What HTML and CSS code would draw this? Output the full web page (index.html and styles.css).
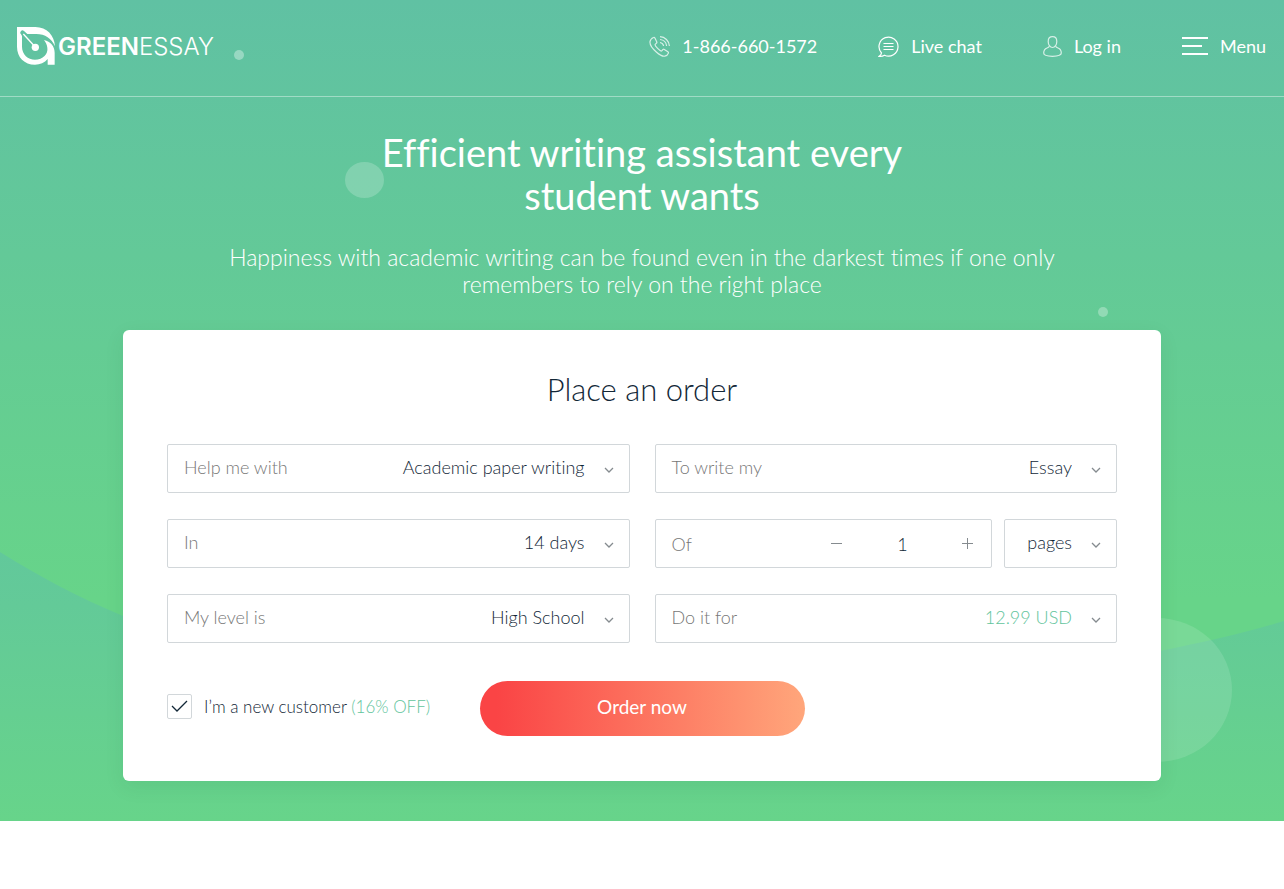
FILE: index.html
```html
<!DOCTYPE html>
<html lang="en">
<head>
    <meta charset="UTF-8">
    <meta name="viewport" content="width=device-width, initial-scale=1.0">
    <title>GreenEssay</title>
    <link rel="stylesheet" href="styles.css">
</head>
<body>
    <div class="hero">
        <svg class="wave" viewBox="0 0 1284 270" preserveAspectRatio="none" aria-hidden="true">
            <defs>
                <linearGradient id="waveFill" x1="0" y1="0" x2="0" y2="1">
                    <stop offset="0" stop-color="#62c89b"/>
                    <stop offset="0.2" stop-color="#63ca98"/>
                    <stop offset="1" stop-color="#67d48a"/>
                </linearGradient>
            </defs>
            <path fill="url(#waveFill)" d="M0 1C40 26 80 47 123 65C400 180 800 180 1160 100C1205 91 1245 82 1284 70V270H0Z"/>
        </svg>
        <span class="bubble bubble-logo"></span>
        <span class="bubble bubble-title"></span>
        <span class="bubble bubble-text"></span>
        <span class="bubble bubble-big"></span>

        <header class="header">
            <a class="logo" href="#">
                <svg class="logo-icon" viewBox="0 0 114 114" aria-hidden="true">
                    <path fill="#fff" fill-rule="evenodd" d="M0 0H55C90 0 112 25 114 58C104 34 84 21 58 21H31L21 12A6 6 0 1 0 12 22L15 27V59C15 82 33 98 54 98C78 98 94 80 91 62C90 53 86 46 81 39C101 44 113 58 113 77V113H92V96C83 107 69 113 54 113C22 113 0 91 0 59Z"/>
                    <circle cx="16" cy="17" r="4" fill="#60c1a2"/>
                    <path stroke="#fff" stroke-width="4" d="M19 21L52 57"/>
                    <circle cx="55" cy="61" r="11" fill="#fff"/>
                </svg>
                <span class="logo-text"><b>GREEN</b>ESSAY</span>
            </a>
            <nav class="nav">
                <a class="nav-link" href="tel:18666601572">
                    <svg class="nav-icon" viewBox="0 0 21 21" aria-hidden="true">
                        <path d="M4.500 1.500C3.400 2 1.300 3.600 1 5.700C.6 9 4.500 13.600 7.300 16C10.200 18.600 13.500 20.600 15.800 20.200C17.500 19.900 19 18.300 19.400 17.100C19.600 16.500 19.300 16 18.900 15.700L15.300 13.400C14.700 13 14.100 13.200 13.800 13.700C13.300 14.400 12.900 15.100 12.300 15.100C10.700 14.900 6.200 10.300 6 8.700C6 8.100 6.700 7.700 7.300 7.300C7.900 6.900 8 6.300 7.700 5.700L5.900 2C5.600 1.500 5.100 1.200 4.500 1.500Z"/>
                        <path d="M11 6.500C12.700 6.700 14.300 8.200 14.600 10M11 3.500C14.500 3.800 17.300 6.500 17.600 10M11 .7C16 .9 20.100 5 20.400 10"/>
                    </svg>
                    1-866-660-1572
                </a>
                <a class="nav-link" href="#">
                    <svg class="nav-icon nav-icon-bright" viewBox="0 0 21 21" aria-hidden="true">
                        <path d="M3.500 17A9.500 9.500 0 1 1 6.500 19.200C5 20.100 3 20.600 1.100 20.300C2.500 19.500 3.300 18.500 3.500 17Z"/>
                        <path d="M5.500 7.500H15.500M5.500 10.500H15.500M5.500 13.500H15.500"/>
                    </svg>
                    Live chat
                </a>
                <a class="nav-link" href="#">
                    <svg class="nav-icon nav-icon-user" viewBox="0 0 19 21" aria-hidden="true">
                        <path d="M9.500 .7C6.600 .7 5.200 2.800 5.200 5.500C5.200 8.700 7 11.500 9.500 11.500S13.800 8.700 13.800 5.500C13.800 2.800 12.400 .7 9.500 .7Z"/>
                        <path d="M6.300 9.900C6.300 11.200 5.500 11.500 4 12C1.700 12.800 .7 14.600 .7 17.100C.7 19.400 4.500 20.300 9.500 20.300S18.300 19.400 18.300 17.100C18.300 14.600 17.300 12.800 15 12C13.500 11.500 12.700 11.200 12.700 9.900"/>
                    </svg>
                    Log in
                </a>
                <button class="nav-link menu-button" type="button">
                    <svg class="menu-icon" viewBox="0 0 26 18" aria-hidden="true">
                        <path d="M0 1H26M0 9H20M0 17H26"/>
                    </svg>
                    Menu
                </button>
            </nav>
        </header>

        <main class="content">
            <h1>Efficient writing assistant every student wants</h1>
            <p class="subtitle">Happiness with academic writing can be found even in the darkest times if one only remembers to rely on the right place</p>

            <form class="order">
                <h2>Place an order</h2>
                <div class="fields">
                    <div class="field">
                        <label for="service">Help me with</label>
                        <select id="service">
                            <option>Academic paper writing</option>
                        </select>
                        <svg class="arrow" viewBox="0 0 10 6" aria-hidden="true"><path d="M1 1L5 5L9 1"/></svg>
                    </div>
                    <div class="field">
                        <label for="paper">To write my</label>
                        <select id="paper">
                            <option>Essay</option>
                        </select>
                        <svg class="arrow" viewBox="0 0 10 6" aria-hidden="true"><path d="M1 1L5 5L9 1"/></svg>
                    </div>
                    <div class="field">
                        <label for="deadline">In</label>
                        <select id="deadline">
                            <option>14 days</option>
                        </select>
                        <svg class="arrow" viewBox="0 0 10 6" aria-hidden="true"><path d="M1 1L5 5L9 1"/></svg>
                    </div>
                    <div class="amount">
                        <div class="field field-count">
                            <label for="count">Of</label>
                            <div class="counter">
                                <button type="button" aria-label="Less">
                                    <svg viewBox="0 0 11 11" aria-hidden="true"><path d="M0 5.500H11"/></svg>
                                </button>
                                <input id="count" type="text" value="1">
                                <button type="button" aria-label="More">
                                    <svg viewBox="0 0 11 11" aria-hidden="true"><path d="M0 5.500H11M5.500 0V11"/></svg>
                                </button>
                            </div>
                        </div>
                        <div class="field field-unit">
                            <select id="unit" aria-label="Unit">
                                <option>pages</option>
                            </select>
                            <svg class="arrow" viewBox="0 0 10 6" aria-hidden="true"><path d="M1 1L5 5L9 1"/></svg>
                        </div>
                    </div>
                    <div class="field">
                        <label for="level">My level is</label>
                        <select id="level">
                            <option>High School</option>
                        </select>
                        <svg class="arrow" viewBox="0 0 10 6" aria-hidden="true"><path d="M1 1L5 5L9 1"/></svg>
                    </div>
                    <div class="field">
                        <label for="price">Do it for</label>
                        <select id="price" class="price">
                            <option>12.99 USD</option>
                        </select>
                        <svg class="arrow" viewBox="0 0 10 6" aria-hidden="true"><path d="M1 1L5 5L9 1"/></svg>
                    </div>
                </div>
                <div class="order-footer">
                    <label class="customer" for="customer">
                        <span class="checkbox">
                            <input id="customer" type="checkbox" checked>
                            <svg viewBox="0 0 17 13" aria-hidden="true"><path d="M1 6L6 11L16 1"/></svg>
                        </span>
                        <span>I’m a new customer <span class="discount">(16% OFF)</span></span>
                    </label>
                    <button class="order-button" type="submit">Order now</button>
                </div>
            </form>
        </main>
    </div>
</body>
</html>
```
FILE: styles.css
```css
* {
    margin: 0;
    padding: 0;
    box-sizing: border-box;
}
body {
    font-family: Lato, sans-serif;
    font-size: 18px;
    font-variant-ligatures: none;
    color: #122737;
    background: #fff;
}
a {
    color: inherit;
    text-decoration: none;
}
button, input, select {
    font: inherit;
    font-variant-ligatures: none;
    color: inherit;
    background: none;
    border: 0;
}
button {
    cursor: pointer;
}
svg {
    display: block;
    fill: none;
}

/* hero */
.hero {
    position: relative;
    overflow: hidden;
    padding-bottom: 40px;
    background: linear-gradient(#60c1a3, #67d489 600px);
}
.wave {
    position: absolute;
    left: 0;
    bottom: 0;
    width: 100%;
    height: 270px;
}
.bubble {
    position: absolute;
    border-radius: 50%;
    background: rgba(255, 255, 255, 0.2);
}
.bubble-logo {
    top: 50px;
    left: 234px;
    width: 10px;
    height: 10px;
    background: rgba(255, 255, 255, 0.35);
}
.bubble-title {
    top: 162px;
    left: 345px;
    width: 39px;
    height: 36px;
}
.bubble-text {
    top: 307px;
    right: 176px;
    width: 10px;
    height: 10px;
    background: rgba(255, 255, 255, 0.3);
}
.bubble-big {
    right: 52px;
    bottom: 59px;
    width: 150px;
    height: 144px;
    background: rgba(255, 255, 255, 0.12);
}

/* header */
.header {
    position: relative;
    display: flex;
    justify-content: space-between;
    align-items: center;
    height: 97px;
    padding: 0 18px 4px 17px;
    border-bottom: 1px solid rgba(255, 255, 255, 0.4);
    color: #fff;
}
.logo {
    display: flex;
    align-items: center;
    gap: 3px;
}
.logo-icon {
    width: 38px;
    height: 38px;
}
.logo-text {
    font-family: Inter, sans-serif;
    font-size: 24px;
    font-weight: 300;
}
.logo-text b {
    font-weight: 600;
}
.nav {
    display: flex;
    align-items: center;
    gap: 61px;
}
.nav-link {
    display: flex;
    align-items: center;
    gap: 12px;
}
.nav-icon {
    width: 21px;
    height: 21px;
    stroke: #fff;
    stroke-width: 1.2;
    opacity: 0.75;
}
.nav-icon-bright {
    opacity: 1;
}
.nav-icon-user {
    width: 19px;
}
.menu-icon {
    width: 26px;
    height: 18px;
    stroke: #fff;
    stroke-width: 2;
}

/* content */
.content {
    position: relative;
    max-width: 1038px;
    margin: 0 auto;
    padding-top: 34px;
    text-align: center;
}
h1 {
    max-width: 600px;
    margin: 0 auto 27px;
    font-size: 38px;
    font-weight: 400;
    line-height: 43px;
    color: #fff;
}
.subtitle {
    max-width: 860px;
    margin: 0 auto 32px;
    font-size: 23px;
    font-weight: 300;
    line-height: 27px;
    color: #fff;
}

/* order form */
.order {
    padding: 39px 44px 45px;
    background: #fff;
    border-radius: 6px;
    box-shadow: 0 6px 20px rgba(0, 80, 40, 0.08);
}
h2 {
    margin-bottom: 35px;
    font-size: 31px;
    font-weight: 300;
    line-height: 40px;
}
.fields {
    display: grid;
    grid-template-columns: 1fr 1fr;
    gap: 26px 25px;
}
.field {
    position: relative;
    display: flex;
    align-items: center;
    height: 49px;
    padding: 0 0 3px 16px;
    border: 1px solid #d2d7da;
    border-radius: 2px;
    font-weight: 300;
}
.field label {
    color: #777;
}
.field select {
    flex: 1;
    min-width: 0;
    height: 100%;
    padding-right: 44px;
    appearance: none;
    text-align-last: right;
    cursor: pointer;
}
.field .price {
    color: #62c49c;
}
.arrow {
    position: absolute;
    top: 22px;
    right: 15px;
    width: 10px;
    height: 6px;
    stroke: #858b8f;
    stroke-width: 1.3;
    pointer-events: none;
}
.amount {
    display: grid;
    grid-template-columns: 3fr 1fr;
    gap: 12px;
}
.field-count {
    justify-content: space-between;
    padding-bottom: 0;
}
.counter {
    display: flex;
    align-items: center;
    gap: 10px;
    padding-right: 8px;
}
.counter button {
    padding: 10px;
}
.counter svg {
    width: 11px;
    height: 11px;
    stroke: #858b8f;
}
.counter input {
    width: 80px;
    text-align: center;
}

/* form footer */
.order-footer {
    display: grid;
    grid-template-columns: 1fr 325px 1fr;
    align-items: center;
    margin-top: 38px;
}
.customer {
    display: flex;
    align-items: center;
    gap: 12px;
    padding-bottom: 4px;
    font-size: 17px;
    font-weight: 300;
    white-space: nowrap;
    cursor: pointer;
}
.checkbox {
    position: relative;
}
.checkbox input {
    display: block;
    width: 25px;
    height: 25px;
    appearance: none;
    border: 1px solid #d2d7da;
    border-radius: 2px;
}
.checkbox svg {
    position: absolute;
    top: 6px;
    left: 4px;
    width: 17px;
    height: 13px;
    stroke: #122737;
    stroke-width: 1.3;
    visibility: hidden;
}
.checkbox input:checked + svg {
    visibility: visible;
}
.discount {
    color: #62c49c;
}
.order-button {
    height: 55px;
    padding-bottom: 4px;
    border-radius: 28px;
    background: linear-gradient(90deg, #fa4445 5%, #ffa67b);
    color: #fff;
    font-size: 19px;
}
```
